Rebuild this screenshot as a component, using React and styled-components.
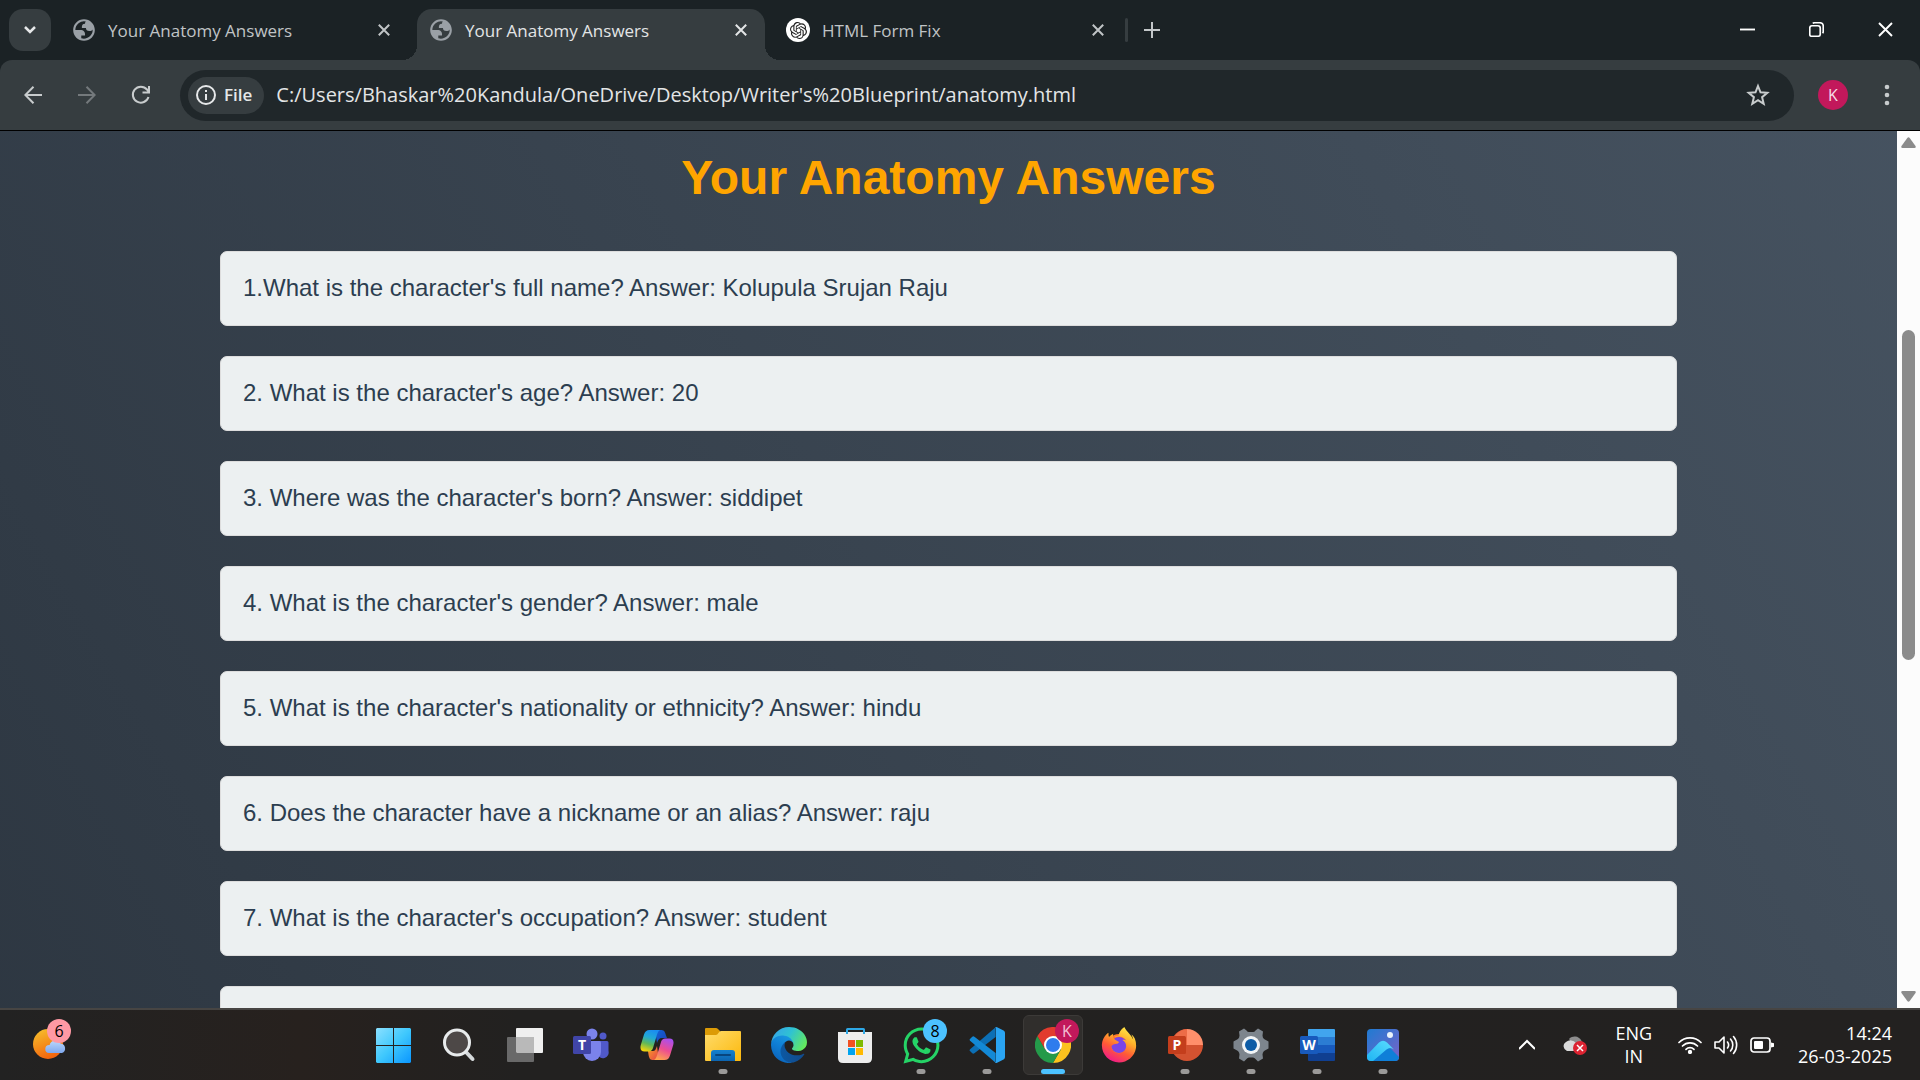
import React from 'react';
import styled, { createGlobalStyle } from 'styled-components';
import { FaWhatsapp, FaFirefoxBrowser } from 'react-icons/fa';
import { SiOpenai } from 'react-icons/si';

const UI_FONT = '"Open Sans", "Noto Sans", sans-serif';

const GlobalStyle = createGlobalStyle`
  *, *::before, *::after { box-sizing: border-box; }
  body { margin: 0; background: #1b2225; font-family: ${UI_FONT}; }
  button, input { font: inherit; color: inherit; border: 0; background: none; padding: 0; margin: 0; }
  svg { display: block; flex: none; }
`;

const Screen = styled.div`
  display: flex;
  flex-direction: column;
  height: 100vh;
  overflow: hidden;
`;

/* ---------- tab strip ---------- */

const TabStrip = styled.header`
  display: flex;
  align-items: flex-start;
  flex: none;
  height: 60px;
  padding: 9px 0 0 9px;
  background: #1b2225;
  color: #c3c7c9;
`;

const TabSearch = styled.button`
  display: grid;
  place-items: center;
  width: 42px;
  height: 42px;
  margin-right: 9px;
  border-radius: 14px;
  background: #363d40;
  color: #e6e8e9;
`;

const TabList = styled.nav`
  display: flex;
  gap: 9px;
`;

const Tab = styled.div`
  position: relative;
  display: flex;
  align-items: center;
  width: 348px;
  height: 51px;
  padding: 0 12px 9px 12px;
  border-radius: 15px 15px 0 0;
  background: ${(p) => (p.$active ? '#363d40' : 'transparent')};
  color: ${(p) => (p.$active ? '#e3e5e6' : '#c0c4c6')};

  &::before, &::after {
    content: '';
    display: ${(p) => (p.$active ? 'block' : 'none')};
    position: absolute;
    bottom: 0;
    width: 15px;
    height: 15px;
  }
  &::before {
    right: 100%;
    background: radial-gradient(circle at 0 0, transparent 15px, #363d40 15px);
  }
  &::after {
    left: 100%;
    background: radial-gradient(circle at 100% 0, transparent 15px, #363d40 15px);
  }
`;

const Favicon = styled.span`
  display: flex;
  align-items: center;
  justify-content: center;
  width: 24px;
  height: 24px;
  margin-right: 12px;
  border-radius: 50%;
  background: ${(p) => (p.$light ? '#fff' : 'transparent')};
  color: ${(p) => (p.$light ? '#202020' : '#9aa0a6')};
`;

const TabTitle = styled.span`
  flex: 1;
  font-size: 17px;
  line-height: 24px;
  padding-top: 2px;
  white-space: nowrap;
`;

const TabClose = styled.button`
  display: grid;
  place-items: center;
  width: 24px;
  height: 24px;
`;

const TabDivider = styled.span`
  width: 3px;
  height: 24px;
  margin: 9px 0 0 3px;
  border-radius: 2px;
  background: #363d40;
`;

const NewTab = styled.button`
  display: grid;
  place-items: center;
  width: 42px;
  height: 42px;
  margin-left: 3px;
`;

const WindowControls = styled.div`
  display: flex;
  margin: -9px 0 0 auto;
`;

const WindowButton = styled.button`
  display: grid;
  place-items: center;
  width: 69px;
  height: 59px;
  color: #fff;
`;

/* ---------- toolbar ---------- */

const Toolbar = styled.div`
  display: flex;
  align-items: center;
  flex: none;
  height: 71px;
  padding: 0 6px;
  border-bottom: 1px solid #000;
  border-radius: 12px 12px 0 0;
  background: #363d40;
`;

const NavButton = styled.button`
  display: grid;
  place-items: center;
  width: 54px;
  height: 51px;
  color: ${(p) => (p.disabled ? '#74797c' : '#c8cccd')};
`;

const Omnibox = styled.form`
  display: flex;
  align-items: center;
  flex: 1;
  height: 51px;
  margin: 0 12px;
  padding: 0 24px 0 8px;
  border-radius: 26px;
  background: #20272a;
`;

const SchemeChip = styled.button`
  display: flex;
  align-items: center;
  gap: 8px;
  height: 37px;
  padding: 0 12px 0 8px;
  border-radius: 19px;
  background: #363d40;
  color: #e6e8e9;
  font-size: 17px;
  font-weight: 600;
  line-height: 24px;
`;

const AddressInput = styled.input`
  flex: 1;
  min-width: 0;
  margin-left: 12px;
  font-size: 20px;
  line-height: 28px;
  color: #e3e5e6;
  outline: none;
`;

const IconButton = styled.button`
  display: grid;
  place-items: center;
  width: ${(p) => p.$width}px;
  height: 36px;
  color: #c8cccd;
`;

const Avatar = styled.span`
  display: grid;
  place-items: center;
  width: 30px;
  height: 30px;
  border-radius: 50%;
  background: #c2185b;
  color: #f6dfe8;
  font-size: 16px;
  line-height: 30px;
`;

/* ---------- page ---------- */

const Viewport = styled.div`
  display: flex;
  flex: 1;
  min-height: 0;
`;

const Page = styled.main`
  flex: 1;
  overflow: hidden;
  padding: 16px 220px 0;
  background: linear-gradient(60deg, #29323c 0%, #485563 100%) 0 -464px / 100% 2200px no-repeat;
  font-family: "Liberation Sans", Arial, sans-serif;
`;

const Title = styled.h1`
  margin: 0 0 42px;
  color: orange;
  font-size: 48px;
  line-height: 62px;
  text-align: center;
`;

const AnswerList = styled.div`
  display: flex;
  flex-direction: column;
  gap: 30px;
`;

const Answer = styled.p`
  flex: none;
  height: 75px;
  margin: 0;
  padding: 21px 22px;
  border: 1px solid #ddd;
  border-radius: 7px;
  background: #ecf0f1;
  color: #2c3e50;
  font-size: 24px;
  line-height: 29px;
`;

const Scrollbar = styled.div`
  display: flex;
  flex-direction: column;
  align-items: center;
  flex: none;
  width: 23px;
  background: #fcfcfc;
`;

const ScrollArrow = styled.button`
  display: grid;
  place-items: center;
  width: 23px;
  height: 23px;
  color: #8b8b8b;
`;

const ScrollGap = styled.span`
  flex: ${(p) => p.$grow} 0 0;
`;

const ScrollThumb = styled.span`
  flex: 330 0 0;
  width: 13px;
  border-radius: 7px;
  background: #8b8b8b;
`;

/* ---------- taskbar ---------- */

const Taskbar = styled.footer`
  display: flex;
  align-items: center;
  flex: none;
  height: 72px;
  border-top: 2px solid #474543;
  background: linear-gradient(90deg, #222222 0, #27211e 300px, #222120 520px, #232120 100%);
  color: #fff;
`;

const WidgetArea = styled.div`
  flex: none;
  width: 363px;
  padding-left: 21px;
`;

const AppRow = styled.div`
  display: flex;
  gap: 6px;
`;

const AppButton = styled.button`
  position: relative;
  display: grid;
  place-items: center;
  width: 60px;
  height: 60px;
  border-radius: 6px;
  border: 1px solid ${(p) => (p.$active ? '#3c3a38' : 'transparent')};
  background: ${(p) => (p.$active ? '#302e2c' : 'transparent')};
`;

const RunningMark = styled.span`
  position: absolute;
  left: 50%;
  bottom: 0;
  width: ${(p) => (p.$active ? 24 : 9)}px;
  height: 5px;
  border-radius: 3px;
  background: ${(p) => (p.$active ? '#4cc2ff' : '#9b9a99')};
  transform: translateX(-50%);
`;

const Badge = styled.span`
  position: absolute;
  top: 3px;
  right: ${(p) => p.$inset || 3}px;
  width: 24px;
  height: 24px;
  border-radius: 50%;
  background: ${(p) => p.$color};
  color: ${(p) => p.$text || '#000'};
  font-size: 16px;
  line-height: 24px;
  text-align: center;
`;

const Tray = styled.div`
  display: flex;
  align-items: center;
  margin-left: auto;
  padding-right: 28px;
`;

const TrayButton = styled.button`
  display: grid;
  place-items: center;
  width: ${(p) => (p.$wide ? 48 : 36)}px;
  height: 48px;
`;

const TrayText = styled.button`
  margin: 0 ${(p) => p.$gapRight}px 0 ${(p) => p.$gapLeft}px;
  font-size: 18px;
  line-height: 23px;
  text-align: ${(p) => p.$align};
`;

const answers = [
  "1.What is the character's full name? Answer: Kolupula Srujan Raju",
  "2. What is the character's age? Answer: 20",
  "3. Where was the character's born? Answer: siddipet",
  "4. What is the character's gender? Answer: male",
  "5. What is the character's nationality or ethnicity? Answer: hindu",
  "6. Does the character have a nickname or an alias? Answer: raju",
  "7. What is the character's occupation? Answer: student",
  '',
];

/* ---------- drawings ---------- */

const Stroke = ({ size, d, width = 2, box = 24, ...rest }) => (
  <svg width={size} height={size} viewBox={`0 0 ${box} ${box}`} fill="none" stroke="currentColor" strokeWidth={width} {...rest}>
    <path d={d} />
  </svg>
);

const Globe = () => (
  <svg width="26" height="26" viewBox="0 0 24 24" fill="currentColor">
    <path fillRule="evenodd" d="M12 2c5.523 0 10 4.477 10 10s-4.477 10-10 10S2 17.523 2 12 6.477 2 12 2zM4 12h4.4c3.407.022 4.922 1.73 4.543 5.127H9.488v2.47a8.004 8.004 0 0 0 10.498-8.083C19.327 12.504 18.332 13 17 13c-2.137 0-3.206-.916-3.206-2.75h-3.748c-.274-2.728.683-4.092 2.87-4.092 0-.975.327-1.597.811-1.97A8.004 8.004 0 0 0 4 12z" />
  </svg>
);

const Cross = ({ size = 12, width = 2 }) => <Stroke size={size} box={12} width={width} d="M.8.8l10.4 10.4M11.2.8L.8 11.2" />;

const WeatherIcon = () => (
  <svg width="36" height="36" viewBox="0 0 36 36">
    <defs>
      <linearGradient id="sun" x1=".2" y1="0" x2=".6" y2="1"><stop stopColor="#f6bd2b" /><stop offset="1" stopColor="#f2610c" /></linearGradient>
      <linearGradient id="cloud" x1="0" y1="0" x2="0" y2="1"><stop stopColor="#bcd8fb" /><stop offset="1" stopColor="#7fa8ee" /></linearGradient>
    </defs>
    <circle cx="15" cy="17" r="15" fill="url(#sun)" />
    <path d="M16 26a4 4 0 0 1 .6-8 6 6 0 0 1 11-1.600A5 5 0 0 1 29 26z" fill="url(#cloud)" />
  </svg>
);

const StartIcon = () => (
  <svg width="35" height="35" viewBox="0 0 35 35">
    <defs><linearGradient id="win" gradientUnits="userSpaceOnUse" x1="0" y1="0" x2="35" y2="35"><stop stopColor="#8be0ff" /><stop offset=".5" stopColor="#3fc8fd" /><stop offset="1" stopColor="#0a96ff" /></linearGradient></defs>
    <path d="M1 0h16v17H0V1zM18 0h16l1 1v16H18zM0 18h17v17H1l-1-1zM18 18h17v16l-1 1H18z" fill="url(#win)" />
  </svg>
);

const SearchIcon = () => (
  <svg width="34" height="34" viewBox="0 0 34 34">
    <path d="M23 23l7.500 8" stroke="#d5d9db" strokeWidth="4" strokeLinecap="round" />
    <circle cx="15" cy="14.500" r="12.500" fill="#4d4847" stroke="#e8ebec" strokeWidth="3" />
  </svg>
);

const TaskViewIcon = () => (
  <svg width="36" height="34" viewBox="0 0 36 34">
    <rect x="9" y="0" width="27" height="25" rx="1" fill="#efefef" />
    <rect x="0" y="9" width="27" height="25" rx="1" fill="#696969" />
    <path d="M9 9h18v16H10l-1-1z" fill="#b9b9b9" />
  </svg>
);

const TeamsIcon = () => (
  <svg width="36" height="34" viewBox="0 0 36 34">
    <circle cx="30" cy="8" r="3.500" fill="#5059c9" />
    <path d="M24 13h10q1.500 0 1.500 1.500V23a5.500 5.500 0 0 1-11 3z" fill="#5059c9" />
    <circle cx="19" cy="6" r="5.500" fill="#7b83eb" />
    <path d="M10 13h16.500q1.500 0 1.500 1.500V24a9 9 0 0 1-18 0z" fill="#7b83eb" />
    <rect x="0" y="8" width="18" height="18" rx="1.500" fill="#4045a8" />
    <text x="9" y="22" fill="#fff" fontFamily="Open Sans, sans-serif" fontWeight="700" fontSize="14" textAnchor="middle">T</text>
  </svg>
);

const CopilotIcon = () => (
  <svg width="34" height="32" viewBox="0 0 34 32">
    <defs>
      <linearGradient id="cpA" x1=".6" y1="0" x2=".3" y2="1"><stop stopColor="#1b8df0" /><stop offset=".35" stopColor="#22a9d6" /><stop offset=".65" stopColor="#5fb85a" /><stop offset="1" stopColor="#f5d50a" /></linearGradient>
      <linearGradient id="cpB" x1=".7" y1="0" x2=".3" y2="1"><stop stopColor="#a94ff0" /><stop offset=".5" stopColor="#ec4d92" /><stop offset="1" stopColor="#ffa44c" /></linearGradient>
      <linearGradient id="cpC" x1="0" y1="0" x2="1" y2="1"><stop stopColor="#1267d8" /><stop offset="1" stopColor="#1b3fb8" /></linearGradient>
      <linearGradient id="cpD" x1="0" y1="0" x2="1" y2="1"><stop stopColor="#f9a325" /><stop offset="1" stopColor="#e6404a" /></linearGradient>
    </defs>
    <path d="M15 1h6.500c3 0 3.800 3 4.500 5.500L27 9h-5c-3 0-4 2-5 5z" fill="url(#cpC)" />
    <path d="M19 31h-6.500c-3 0-3.500-3-4-5.500L8 22h5c2 0 3-2 4-5z" fill="url(#cpD)" />
    <path d="M9.500 1H20c-2 1-2.800 3.500-4 8l-3 10c-.7 2.200-2 3.500-4.200 3.500H4.500C1 22.500-.2 20 .8 16L4 5.500C5 2.500 6.500 1 9.500 1z" fill="url(#cpA)" />
    <path d="M24.500 31H14c2-1 2.800-3.500 4-8l3-10c.7-2.200 2-3.500 4.200-3.500h4.300c3.500 0 4.700 2.500 3.700 6.500L30 26.500c-1 3-2.500 4.500-5.500 4.500z" fill="url(#cpB)" />
  </svg>
);

const ExplorerIcon = () => (
  <svg width="36" height="34" viewBox="0 0 36 34">
    <defs>
      <linearGradient id="fold" x1="0" y1="0" x2="1" y2="1"><stop stopColor="#ffdc6b" /><stop offset="1" stopColor="#fcb80c" /></linearGradient>
      <linearGradient id="foldB" x1="0" y1="0" x2="0" y2="1"><stop stopColor="#1581cf" /><stop offset="1" stopColor="#0c64b0" /></linearGradient>
    </defs>
    <path d="M0 1q0-1 1-1h10q1 0 2 1l2 2v4H0z" fill="#dc9b06" />
    <path d="M0 7h11c2 0 3-4 5-4h19q1 0 1 1v28q0 1-1 1H1q-1 0-1-1z" fill="url(#fold)" />
    <path d="M6 33v-8q0-3 3-3h18q3 0 3 3v8z" fill="url(#foldB)" />
    <path d="M11 27h14" stroke="#08457e" strokeWidth="2" strokeLinecap="round" />
  </svg>
);

const EdgeIcon = () => (
  <svg width="36" height="36" viewBox="0 0 256 256">
    <defs>
      <linearGradient id="edA" x1="0" y1=".5" x2="1" y2=".5"><stop stopColor="#0c59a4" /><stop offset="1" stopColor="#114a8b" /></linearGradient>
      <linearGradient id="edB" x1=".8" y1="0" x2=".3" y2="1"><stop stopColor="#1b9de2" /><stop offset=".5" stopColor="#0f7fd6" /><stop offset="1" stopColor="#0b62b8" /></linearGradient>
      <linearGradient id="edC" x1="0" y1=".3" x2="1" y2=".7"><stop stopColor="#35a5e8" /><stop offset=".45" stopColor="#2fc2d3" /><stop offset="1" stopColor="#66eb58" /></linearGradient>
    </defs>
    <path fill="url(#edA)" d="M231 190.500c-3.400 1.800-6.900 3.400-10.500 4.700a101.600 101.600 0 0 1-35.900 6.400c-47.300 0-88.500-32.500-88.500-74.300a31.500 31.500 0 0 1 16.400-27.300c-42.800 1.800-53.800 46.400-53.800 72.500 0 74 68.100 81.400 82.800 81.400 7.900 0 19.800-2.300 27-4.600l1.300-.4a128.300 128.300 0 0 0 66.600-52.800 4 4 0 0 0-5.400-5.600z" />
    <path fill="url(#edB)" d="M105.700 241.400a79.200 79.200 0 0 1-22.700-21.300 80.700 80.700 0 0 1 29.500-120c3.200-1.500 8.500-4.100 15.600-4a32.400 32.400 0 0 1 25.700 13 31.900 31.900 0 0 1 6.300 18.700c0-.2 24.500-79.600-80-79.600-43.900 0-80 41.600-80 78.200a130.200 130.200 0 0 0 12.100 56 128 128 0 0 0 156.400 67 75.500 75.500 0 0 1-62.800-8z" />
    <path fill="url(#edC)" d="M152.300 148.900c-.9 1-3.400 2.500-3.400 5.600 0 2.600 1.700 5.200 4.800 7.300 14.300 10 41.400 8.600 41.500 8.600a59.600 59.600 0 0 0 30.300-8.300 61.400 61.400 0 0 0 30.400-52.900c.3-22.400-8-37.300-11.300-43.900C223.500 23.900 177.700 0 128 0A128 128 0 0 0 0 126.200c.5-36.500 36.800-66 80-66 3.500 0 23.500.3 42 10a72.600 72.600 0 0 1 30.900 29.300c6.100 10.600 7.200 24.100 7.200 29.500s-2.700 13.300-7.800 19.900z" />
  </svg>
);

const StoreIcon = () => (
  <svg width="36" height="36" viewBox="0 0 36 36">
    <path d="M10 8V2.500Q10 2 10.500 2h16q.5 0 .5.500V8" fill="none" stroke="#2ea8e6" strokeWidth="2" />
    <path d="M1 5h34v26q0 5-5 5H6q-5 0-5-5z" fill="#ededed" />
    <path d="M10 5v2M27 5v2" stroke="#2ea8e6" strokeWidth="2" />
    <path fill="#f25022" d="M11 13h7v7h-7z" /><path fill="#7fba00" d="M19 13h7v7h-7z" />
    <path fill="#00a4ef" d="M11 21h7v7h-7z" /><path fill="#ffb900" d="M19 21h7v7h-7z" />
  </svg>
);

const CodeIcon = () => (
  <svg width="36" height="36" viewBox="0 0 100 100">
    <path d="M2 66l7 7q3 2 6 0l59-45V1L3 62q-2 2-1 4z" fill="#0c6fb5" />
    <path d="M2 34l7-7q3-2 6 0l59 45v27L3 38q-2-2-1-4z" fill="#1389d6" />
    <path d="M72 1q3-2 6 0l18 9q4 2 4 6v68q0 4-4 6l-18 9q-3 2-6 0 3 0 3-4V5q0-4-3-4z" fill="#2aa4f2" />
  </svg>
);

const ChromeIcon = () => (
  <svg width="36" height="36" viewBox="0 0 36 36">
    <path d="M18 9h15.600A18 18 0 0 1 18 36l7.800-13.500z" fill="#fcc31e" />
    <path d="M2.400 9l7.800 13.500L18 27l7.800-4.500L18 36A18 18 0 0 1 2.400 9z" fill="#249a4a" />
    <path d="M2.400 9A18 18 0 0 1 33.600 9H18l-7.800 13.500z" fill="#e23b2e" />
    <circle cx="18" cy="18" r="9" fill="#fff" />
    <circle cx="18" cy="18" r="7" fill="#2f7ced" />
  </svg>
);

const FirefoxIcon = () => (
  <svg width="36" height="36" viewBox="0 0 36 36">
    <defs>
      <linearGradient id="ffA" x1=".8" y1="0" x2=".3" y2="1"><stop stopColor="#fff04a" /><stop offset=".35" stopColor="#ffb02a" /><stop offset=".65" stopColor="#ff5a36" /><stop offset="1" stopColor="#f0188c" /></linearGradient>
    </defs>
    <circle cx="18" cy="20" r="13" fill="#ff7a2c" />
    <circle cx="18" cy="18" r="8" fill="#7a45e6" />
    <FaFirefoxBrowser x="0" y="0" size={36} fill="url(#ffA)" stroke="none" />
  </svg>
);

const PowerPointIcon = () => (
  <svg width="36" height="36" viewBox="0 0 36 36">
    <path d="M20 2a16 16 0 1 0 16 16H20z" fill="#d35230" />
    <path d="M20 2a16 16 0 0 1 16 16H20z" fill="#ff8f6b" />
    <path d="M20 2v16H5A16 16 0 0 1 20 2z" fill="#ed6c47" />
    <rect x="1" y="9" width="18" height="18" rx="1.500" fill="#c43e1c" />
    <text x="10" y="23" fill="#fff" fontFamily="Open Sans, sans-serif" fontWeight="700" fontSize="14" textAnchor="middle">P</text>
  </svg>
);

const SettingsIcon = () => (
  <svg width="36" height="36" viewBox="0 0 36 36">
    <path d="M11 1.500l2.500 2q1 1.500 2.500 1.500h4q1.500 0 2.500-1.500l2.500-2 5 3-.5 4q0 2 1.500 3.500l4.500 2.500v7L31 24q-1.500 1.500-1.500 3.500l.5 4-5 3-2.500-2.500q-1-1.500-2.500-1.500h-4q-1.500 0-2.500 1.500L11 34.500l-5-3 .5-4q0-2-1.500-3.500L.5 21.500v-7L5 12q1.500-1.500 1.500-3.500l-.5-4z" fill="#7d858d" />
    <circle cx="18" cy="18" r="9" fill="#f1f4f6" />
    <circle cx="18" cy="18" r="6" fill="#0d5ca6" />
  </svg>
);

const WordIcon = () => (
  <svg width="36" height="36" viewBox="0 0 36 36">
    <path d="M10 2h25q1 0 1 1v7H9V3q0-1 1-1z" fill="#41a5ee" />
    <path d="M9 10h27v8H9z" fill="#2b7cd3" /><path d="M9 18h27v8H9z" fill="#185abd" />
    <path d="M9 26h27v7q0 1-1 1H10q-1 0-1-1z" fill="#103f91" />
    <rect x="1" y="9" width="18" height="18" rx="1.500" fill="#185abd" />
    <text x="10" y="23" fill="#fff" fontFamily="Open Sans, sans-serif" fontWeight="700" fontSize="14" textAnchor="middle">W</text>
  </svg>
);

const PhotosIcon = () => (
  <svg width="32" height="32" viewBox="0 0 32 32">
    <defs>
      <linearGradient id="phA" x1="0" y1="0" x2="1" y2="1"><stop stopColor="#1f7bd2" /><stop offset="1" stopColor="#7a62c8" /></linearGradient>
      <linearGradient id="phB" x1="1" y1="0" x2="0" y2="1"><stop stopColor="#5bdcff" /><stop offset="1" stopColor="#1fb5f2" /></linearGradient>
      <clipPath id="phC"><rect width="32" height="32" rx="4" /></clipPath>
    </defs>
    <g clipPath="url(#phC)">
      <path d="M0 0h32v32H0z" fill="url(#phA)" />
      <path d="M4 32l14-13q3-2 6 1l8 8v4z" fill="#0f7fd8" />
      <path d="M0 26l12-12.500q4-3.500 8 0l7 7q-4-3-7.500 0L6 32H0z" fill="url(#phB)" />
    </g>
    <circle cx="23" cy="6" r="3" fill="#e9f3fb" />
  </svg>
);

const CloudErrorIcon = () => (
  <svg width="26" height="22" viewBox="0 0 26 22">
    <path d="M7 5a7 6 0 0 1 12 1l2 4-8 3z" fill="#8d8d8d" />
    <path d="M5 17a5 5 0 0 1-1-9 7 7 0 0 1 10 1l4 8z" fill="#dadada" />
    <circle cx="18" cy="14" r="7" fill="#dc2331" />
    <path d="M15 11l6 6m0-6l-6 6" stroke="#fff" strokeWidth="1.500" />
  </svg>
);

const WifiIcon = () => (
  <svg width="24" height="18" viewBox="0 0 24 18" fill="none" stroke="#fff" strokeWidth="1.700" strokeLinecap="round">
    <path d="M1 6.500a15.500 15.500 0 0 1 22 0M4.500 10a10.500 10.500 0 0 1 15 0M8 13.300a5.800 5.800 0 0 1 8 0" />
    <circle cx="12" cy="16" r="1.300" fill="#fff" />
  </svg>
);

const SpeakerIcon = () => (
  <svg width="24" height="20" viewBox="0 0 24 20" fill="none" stroke="#fff" strokeWidth="1.600" strokeLinecap="round" strokeLinejoin="round">
    <path d="M1 7h4l5-5v16l-5-5H1zM13.500 7a5 5 0 0 1 0 6M16.500 4a9 9 0 0 1 0 12M19.500 1.500a13 13 0 0 1 0 17" />
  </svg>
);

const BatteryIcon = () => (
  <svg width="24" height="16" viewBox="0 0 24 16">
    <rect x="1" y="1" width="19" height="14" rx="3" fill="none" stroke="#fff" strokeWidth="1.700" />
    <rect x="4" y="4" width="9" height="8" rx="1" fill="#fff" />
    <path d="M21 5.500l3 .8v3.400l-3 .8z" fill="#fff" />
  </svg>
);

const apps = [
  { name: 'Start', icon: <StartIcon /> },
  { name: 'Search', icon: <SearchIcon /> },
  { name: 'Task view', icon: <TaskViewIcon /> },
  { name: 'Teams', icon: <TeamsIcon /> },
  { name: 'Copilot', icon: <CopilotIcon /> },
  { name: 'File Explorer', icon: <ExplorerIcon />, running: true },
  { name: 'Edge', icon: <EdgeIcon /> },
  { name: 'Store', icon: <StoreIcon /> },
  { name: 'WhatsApp', icon: <FaWhatsapp size={41} color="#25d366" />, running: true, badge: '8', badgeColor: '#4cc2ff' },
  { name: 'Visual Studio Code', icon: <CodeIcon />, running: true },
  { name: 'Chrome', icon: <ChromeIcon />, running: true, active: true, badge: 'K', badgeColor: '#c2185b', badgeText: '#f3bfd3' },
  { name: 'Firefox', icon: <FirefoxIcon /> },
  { name: 'PowerPoint', icon: <PowerPointIcon />, running: true },
  { name: 'Settings', icon: <SettingsIcon />, running: true },
  { name: 'Word', icon: <WordIcon />, running: true },
  { name: 'Photos', icon: <PhotosIcon />, running: true },
];

const tabs = [
  { title: 'Your Anatomy Answers' },
  { title: 'Your Anatomy Answers', active: true },
  { title: 'HTML Form Fix', chat: true },
];

export default function App() {
  return (
    <Screen>
      <GlobalStyle />
      <TabStrip>
        <TabSearch aria-label="Search tabs"><Stroke size={12} box={12} width={2.5} d="M1 3l5 5 5-5" /></TabSearch>
        <TabList>
          {tabs.map((tab, i) => (
            <Tab key={i} $active={tab.active}>
              <Favicon $light={tab.chat}>{tab.chat ? <SiOpenai size={17} /> : <Globe />}</Favicon>
              <TabTitle>{tab.title}</TabTitle>
              <TabClose aria-label="Close tab"><Cross /></TabClose>
            </Tab>
          ))}
        </TabList>
        <TabDivider />
        <NewTab aria-label="New tab"><Stroke size={16} box={16} width={2} d="M8 0v16M0 8h16" /></NewTab>
        <WindowControls>
          <WindowButton aria-label="Minimize"><Stroke size={15} box={16} width={2} d="M0 8h16" /></WindowButton>
          <WindowButton aria-label="Restore">
            <Stroke size={15} box={16} width={1.8} d="M3 4h6.500Q12 4 12 6.500V13q0 2.200-2.500 2.200H3Q.8 15.200.8 13V6.500Q.8 4 3 4zM4 1.500Q5 .8 6 .8h5.500q3.700 0 3.700 3.700V10q0 1-.7 2" />
          </WindowButton>
          <WindowButton aria-label="Close"><Cross size={15} width={1.5} /></WindowButton>
        </WindowControls>
      </TabStrip>

      <Toolbar>
        <NavButton aria-label="Back"><Stroke size={18} box={18} d="M18 9H1.500M9.500 .8L1.300 9l8.200 8.200" /></NavButton>
        <NavButton aria-label="Forward" disabled><Stroke size={18} box={18} d="M0 9h16.500M8.500.8L16.700 9l-8.200 8.200" /></NavButton>
        <NavButton aria-label="Reload"><Stroke size={20} box={20} d="M17.500 12A8 8 0 1 1 16 4.500l2 2.500M18 1v6.500h-6.500" /></NavButton>
        <Omnibox onSubmit={(e) => e.preventDefault()}>
          <SchemeChip type="button">
            <svg width="20" height="20" viewBox="0 0 20 20" fill="none" stroke="currentColor" strokeWidth="2">
              <circle cx="10" cy="10" r="9" />
              <path d="M10 9v6M10 5v2" />
            </svg>
            File
          </SchemeChip>
          <AddressInput aria-label="Address" defaultValue="C:/Users/Bhaskar%20Kandula/OneDrive/Desktop/Writer's%20Blueprint/anatomy.html" />
          <IconButton type="button" $width={24} aria-label="Bookmark">
            <svg width="24" height="24" viewBox="0 0 24 24" fill="none" stroke="currentColor" strokeWidth="2">
              <path d="M12 3l2.500 6.300 6.800.5-5.200 4.400 1.600 6.600L12 17.200l-5.700 3.600 1.600-6.600-5.200-4.400 6.800-.5z" />
            </svg>
          </IconButton>
        </Omnibox>
        <IconButton $width={54} aria-label="Profile"><Avatar>K</Avatar></IconButton>
        <IconButton $width={54} aria-label="Menu">
          <svg width="6" height="22" viewBox="0 0 6 22" fill="currentColor"><circle cx="3" cy="3" r="2.300" /><circle cx="3" cy="11" r="2.300" /><circle cx="3" cy="19" r="2.300" /></svg>
        </IconButton>
      </Toolbar>

      <Viewport>
        <Page>
          <Title>Your Anatomy Answers</Title>
          <AnswerList>
            {answers.map((text, i) => <Answer key={i}>{text}</Answer>)}
          </AnswerList>
        </Page>
        <Scrollbar>
          <ScrollArrow aria-label="Scroll up"><svg width="15" height="11" viewBox="0 0 15 11" fill="currentColor"><path d="M6.300 1q1.200-1.500 2.400 0l5.800 8q.8 2-1 2h-12q-1.800 0-1-2z" /></svg></ScrollArrow>
          <ScrollGap $grow={176} />
          <ScrollThumb />
          <ScrollGap $grow={325} />
          <ScrollArrow aria-label="Scroll down"><svg width="15" height="11" viewBox="0 0 15 11" fill="currentColor"><path d="M6.300 10q1.200 1.500 2.400 0l5.800-8q.8-2-1-2h-12q-1.800 0-1 2z" /></svg></ScrollArrow>
        </Scrollbar>
      </Viewport>

      <Taskbar>
        <WidgetArea>
          <AppButton aria-label="Weather">
            <WeatherIcon />
            <Badge $color="#ff99a4" $inset={9}>6</Badge>
          </AppButton>
        </WidgetArea>
        <AppRow>
          {apps.map((app) => (
            <AppButton key={app.name} aria-label={app.name} $active={app.active}>
              {app.icon}
              {app.badge && <Badge $color={app.badgeColor} $text={app.badgeText}>{app.badge}</Badge>}
              {app.running && <RunningMark $active={app.active} />}
            </AppButton>
          ))}
        </AppRow>
        <Tray>
          <TrayButton $wide aria-label="Show hidden icons"><Stroke size={16} box={16} width={2} d="M0 12l8-8 8 8" /></TrayButton>
          <TrayButton $wide aria-label="OneDrive"><CloudErrorIcon /></TrayButton>
          <TrayText $align="center" $gapLeft={16} $gapRight={20}>ENG<br />IN</TrayText>
          <TrayButton aria-label="Wi-Fi"><WifiIcon /></TrayButton>
          <TrayButton aria-label="Volume"><SpeakerIcon /></TrayButton>
          <TrayButton aria-label="Battery"><BatteryIcon /></TrayButton>
          <TrayText $align="right" $gapLeft={18} $gapRight={0}>14:24<br />26-03-2025</TrayText>
        </Tray>
      </Taskbar>
    </Screen>
  );
}
